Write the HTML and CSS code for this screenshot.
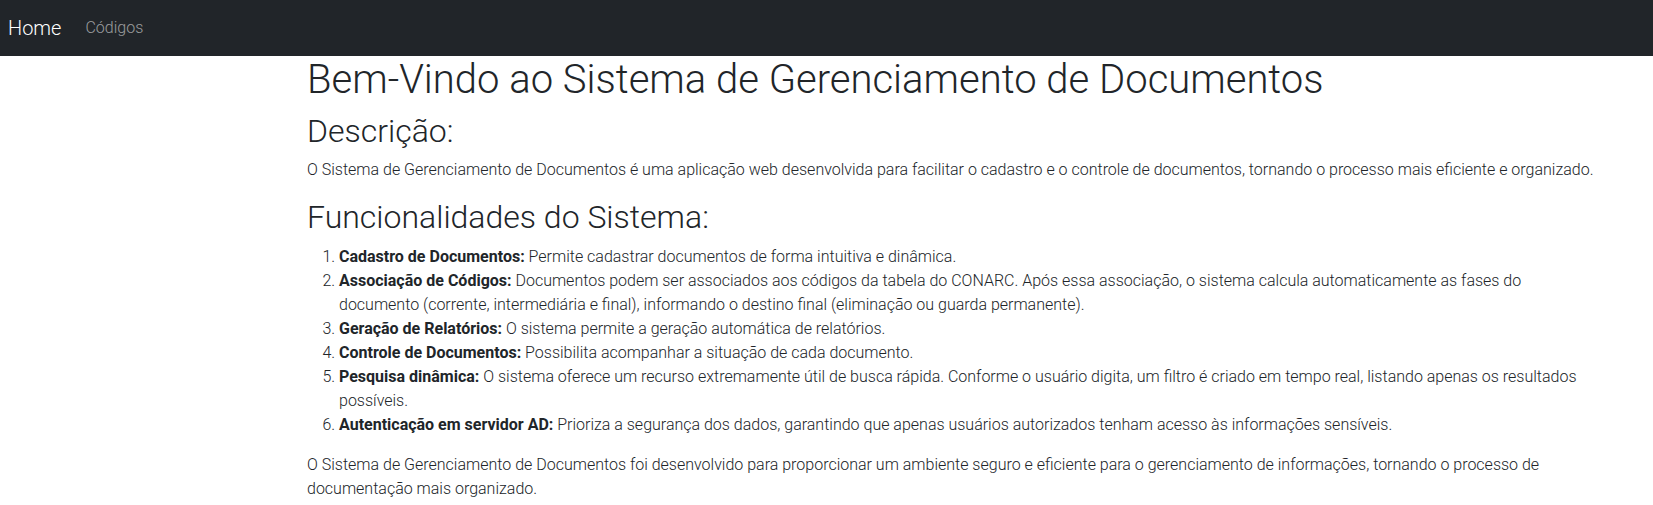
FILE: index.html
```html
<!DOCTYPE html>
<html lang="pt-BR">
<head>
<meta charset="utf-8">
<title>Sistema de Gerenciamento de Documentos</title>
<link rel="stylesheet" href="styles.css">
</head>
<body>
<nav class="navbar">
  <a class="brand" href="#">Home</a>
  <ul class="nav">
    <li><a class="nav-link" href="#">Códigos</a></li>
  </ul>
</nav>
<main class="main">
  <h1 class="title">Bem-Vindo ao Sistema de Gerenciamento de Documentos</h1>
  <h2 class="subtitle">Descrição:</h2>
  <p class="text">O Sistema de Gerenciamento de Documentos é uma aplicação web desenvolvida para facilitar o cadastro e o controle de documentos, tornando o processo mais eficiente e organizado.</p>
  <h2 class="subtitle">Funcionalidades do Sistema:</h2>
  <ol class="features">
    <li><strong>Cadastro de Documentos:</strong> Permite cadastrar documentos de forma intuitiva e dinâmica.</li>
    <li><strong>Associação de Códigos:</strong> Documentos podem ser associados aos códigos da tabela do CONARC. Após essa associação, o sistema calcula automaticamente as fases do documento (corrente, intermediária e final), informando o destino final (eliminação ou guarda permanente).</li>
    <li><strong>Geração de Relatórios:</strong> O sistema permite a geração automática de relatórios.</li>
    <li><strong>Controle de Documentos:</strong> Possibilita acompanhar a situação de cada documento.</li>
    <li><strong>Pesquisa dinâmica:</strong> O sistema oferece um recurso extremamente útil de busca rápida. Conforme o usuário digita, um filtro é criado em tempo real, listando apenas os resultados possíveis.</li>
    <li><strong>Autenticação em servidor AD:</strong> Prioriza a segurança dos dados, garantindo que apenas usuários autorizados tenham acesso às informações sensíveis.</li>
  </ol>
  <p class="text">O Sistema de Gerenciamento de Documentos foi desenvolvido para proporcionar um ambiente seguro e eficiente para o gerenciamento de informações, tornando o processo de documentação mais organizado.</p>
</main>
</body>
</html>
```
FILE: styles.css
```css
* {
  box-sizing: border-box;
}

body {
  margin: 0;
  font-family: Roboto, "Liberation Sans", sans-serif;
  font-weight: 300;
  font-size: 16px;
  line-height: 1.5;
  color: #212529;
  background: #fff;
}

.navbar {
  display: flex;
  align-items: center;
  height: 56px;
  padding: 8px 8px;
  background: #212529;
}

.brand {
  padding: 5px 0;
  margin-right: 16px;
  font-size: 20px;
  line-height: 30px;
  color: #fff;
  text-decoration: none;
}

.nav {
  display: flex;
  list-style: none;
  margin: 0;
  padding: 0;
}

.nav-link {
  display: block;
  padding: 8px 8px;
  color: rgba(255, 255, 255, 0.55);
  text-decoration: none;
}

.main {
  margin-left: 307px;
  width: 1296px;
}

.title {
  margin: 0 0 8px;
  font-size: 40px;
  font-weight: 300;
  line-height: 1.2;
}

.subtitle {
  margin: 0 0 8px;
  font-size: 32px;
  font-weight: 300;
  line-height: 1.2;
}

.text {
  margin: 0 0 16px;
}

.features {
  margin: 0 0 16px;
  padding-left: 32px;
}

.features strong {
  font-weight: 700;
}
```
